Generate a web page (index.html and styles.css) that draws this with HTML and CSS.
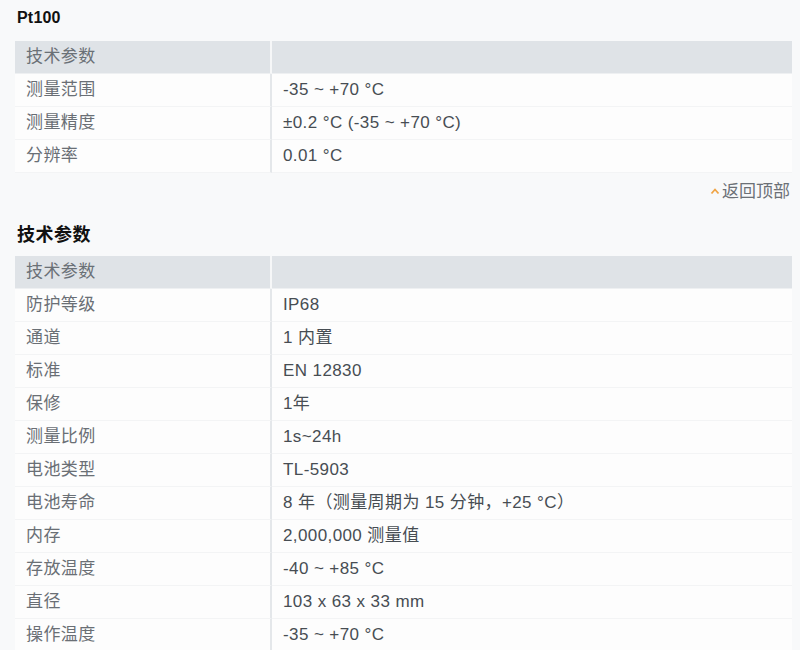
FILE: index.html
```html
<!DOCTYPE html>
<html lang="zh">
<head>
<meta charset="utf-8">
<link rel="stylesheet" href="styles.css">
</head>
<body>
<div class="page">
  <h2 class="title">Pt100</h2>
  <table class="spec">
    <thead><tr><th class="k">技术参数</th><th class="v"></th></tr></thead>
    <tbody>
      <tr><td class="k">测量范围</td><td class="v">-35 ~ +70 °C</td></tr>
      <tr><td class="k">测量精度</td><td class="v">±0.2 °C (-35 ~ +70 °C)</td></tr>
      <tr><td class="k">分辨率</td><td class="v">0.01 °C</td></tr>
    </tbody>
  </table>
  <div class="backtop"><svg class="caret" width="10" height="8" viewBox="0 0 10 8"><path d="M1.5 6.5 L5 2.5 L8.5 6.5" fill="none" stroke="#f0a445" stroke-width="1.8"/></svg>返回顶部</div>
  <h2 class="title second">技术参数</h2>
  <table class="spec">
    <thead><tr><th class="k">技术参数</th><th class="v"></th></tr></thead>
    <tbody>
      <tr><td class="k">防护等级</td><td class="v">IP68</td></tr>
      <tr><td class="k">通道</td><td class="v">1 内置</td></tr>
      <tr><td class="k">标准</td><td class="v">EN 12830</td></tr>
      <tr><td class="k">保修</td><td class="v">1年</td></tr>
      <tr><td class="k">测量比例</td><td class="v">1s~24h</td></tr>
      <tr><td class="k">电池类型</td><td class="v">TL-5903</td></tr>
      <tr><td class="k">电池寿命</td><td class="v">8 年（测量周期为 15 分钟，+25 °C）</td></tr>
      <tr><td class="k">内存</td><td class="v">2,000,000 测量值</td></tr>
      <tr><td class="k">存放温度</td><td class="v">-40 ~ +85 °C</td></tr>
      <tr><td class="k">直径</td><td class="v">103 x 63 x 33 mm</td></tr>
      <tr><td class="k">操作温度</td><td class="v">-35 ~ +70 °C</td></tr>
    </tbody>
  </table>
</div>
</body>
</html>
```
FILE: styles.css
```css
html, body {
  margin: 0;
  padding: 0;
  background: #f8f9fa;
}
body {
  font-family: "Liberation Sans", Arial, "Noto Sans CJK SC", sans-serif;
  font-size: 17px;
  letter-spacing: 0.4px;
  color: #555b61;
}
.page {
  padding: 8px 8px 0 15px;
}
.title {
  margin: 0 0 13px 2px;
  font-size: 16px;
  line-height: 20px;
  font-weight: bold;
  color: #111;
  letter-spacing: 0.2px;
}
.title.second {
  margin-top: 23px;
  margin-bottom: 11px;
  font-size: 18px;
  letter-spacing: 0.5px;
}
.spec {
  width: 777px;
  border-collapse: separate;
  border-spacing: 0;
  background: #fdfdfd;
}
.spec th, .spec td {
  height: 33px;
  padding: 0 0 0 11px;
  text-align: left;
  font-weight: normal;
  box-sizing: border-box;
  line-height: 20px;
}
.spec th {
  background: #dfe3e7;
  color: #6a7076;
  border-bottom: 1px solid #eef0f2;
}
.spec th.k {
  width: 257px;
  border-right: 2px solid #f6f7f8;
}
.spec td {
  border-bottom: 1px solid #f3f4f5;
}
.spec td.k {
  width: 257px;
  color: #6a6f75;
  border-right: 2px solid #e4e7ea;
}
.spec td.v {
  color: #474d53;
}
.backtop {
  display: flex;
  justify-content: flex-end;
  align-items: center;
  margin-top: 9px;
  height: 20px;
  line-height: 20px;
  padding-right: 2px;
  color: #6b7076;
  font-size: 17px;
  letter-spacing: 0;
}
.caret {
  margin-right: 2px;
  margin-top: -2px;
}
```
